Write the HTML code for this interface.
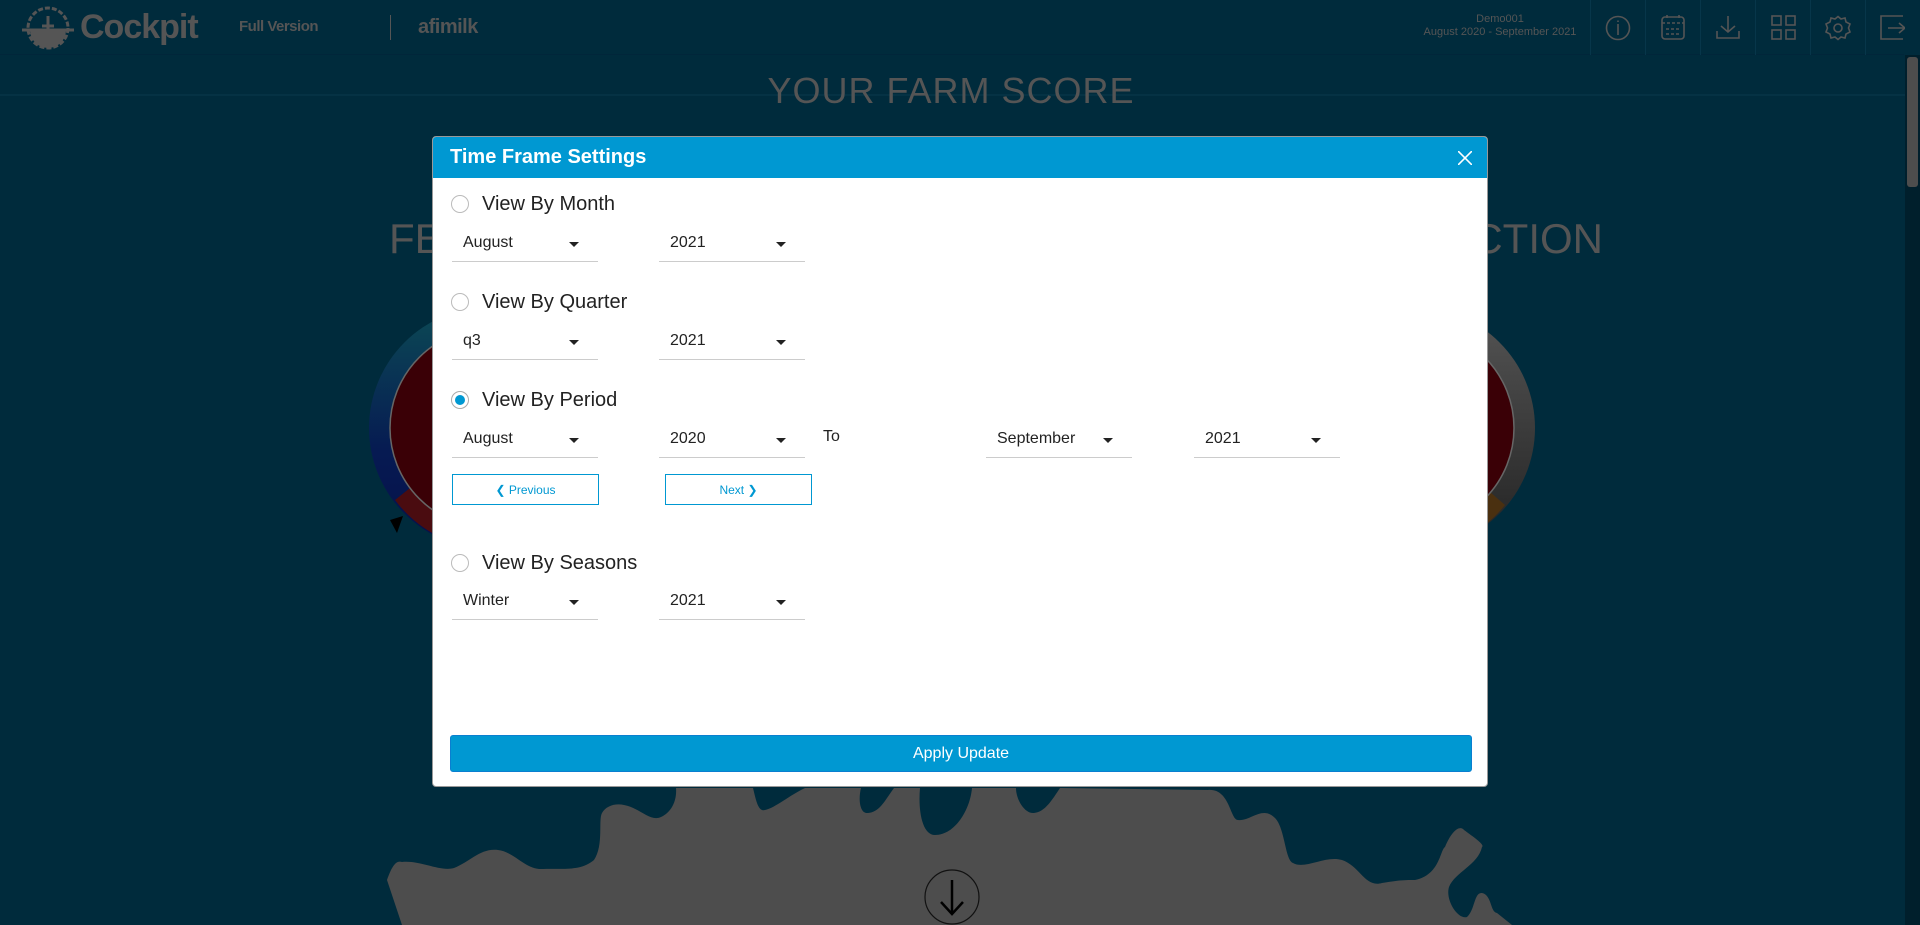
<!DOCTYPE html>
<html><head><meta charset="utf-8"><style>
*{box-sizing:border-box;margin:0;padding:0}
body{width:1920px;height:925px;overflow:hidden;background:#002b3c;font-family:"Liberation Sans",sans-serif;position:relative}
.abs{position:absolute}
.hdr{left:0;top:0;width:1904px;height:55px;border-bottom:1px solid #01263a;background:#002b3c}
.gray{color:#555}
.icd{position:absolute;top:0;height:55px;border-left:1px solid #07364a}
.modal{left:432px;top:136px;width:1056px;height:651px;background:#fff;border-radius:4px;overflow:hidden;border:1px solid #999}
.mh{height:41px;background:#0098d2;color:#fff;font-weight:bold;font-size:20px;padding:9px 0 0 17px}
.lbl{font-size:20px;color:#222}
.radio{width:18px;height:18px;border:1px solid #bbb;border-radius:50%;background:#fff}
.sel{width:146px;height:30px;border-bottom:1px solid #ccc;font-size:16px;color:#222;padding:2px 0 0 11px}
.sel:after{content:"";position:absolute;right:19px;top:10px;border-left:5px solid transparent;border-right:5px solid transparent;border-top:5px solid #222}
.btn{width:147px;height:31px;border:1px solid #0098d2;color:#0098d2;font-size:12px;text-align:center;padding-top:8px}
</style></head><body>
<svg class="abs" style="left:0;top:0" width="1920" height="925">
<line x1="0" y1="95" x2="1905" y2="95" stroke="#0a3a4d" stroke-width="1"/>
<text x="951" y="103" text-anchor="middle" font-family="Liberation Sans" font-size="36" fill="#555" letter-spacing="1">YOUR FARM SCORE</text>
<text x="389" y="253" font-family="Liberation Sans" font-size="42" fill="#555">FE</text>
<text x="1603" y="253" text-anchor="end" font-family="Liberation Sans" font-size="42" fill="#555">CTION</text>
<defs><linearGradient id="lg" x1="0" y1="0" x2="0" y2="1"><stop offset="0" stop-color="#0c4a55"/><stop offset=".6" stop-color="#061a52"/><stop offset="1" stop-color="#05104a"/></linearGradient>
<linearGradient id="rg" x1="0" y1="0" x2="0" y2="1"><stop offset="0" stop-color="#555"/><stop offset="1" stop-color="#222"/></linearGradient></defs>
<circle cx="490" cy="428" r="121" fill="url(#lg)"/>
<path d="M395 500 A121 121 0 0 0 490 549 L490 528 A100 100 0 0 1 410 488Z" fill="#4a0c10"/>
<circle cx="490" cy="428" r="100" fill="#3a0006" stroke="#666" stroke-width="1.5"/>
<polygon points="390,520 403,516 397,533" fill="#000"/>
<circle cx="1414" cy="428" r="121" fill="url(#rg)"/>
<path d="M1505 505 A121 121 0 0 1 1470 535 L1460 518 A100 100 0 0 0 1490 492Z" fill="#4a3010"/>
<circle cx="1414" cy="428" r="100" fill="#3a0006" stroke="#666" stroke-width="1.5"/>
<path d="M387 880 C392 866 396 860 402 862 C420 860 440 872 454 868 C470 862 480 848 498 850 C515 852 525 870 543 869 C560 868 580 872 594 860 C604 845 598 820 602 813 C606 806 615 803 624 805 C640 808 650 822 661 817 C672 812 677 800 676 788 L753 788 C756 800 758 812 765 810 C775 808 790 795 805 788 L861 788 C858 800 860 814 868 813 C880 812 885 800 894 788 L920 788 C918 810 922 835 935 835 C955 835 970 810 972 788 L1016 788 C1016 800 1025 814 1034 813 C1045 812 1052 800 1060 788 L1208 790 C1230 788 1230 820 1238 820 C1250 822 1262 805 1275 818 C1285 828 1285 860 1293 863 C1305 870 1325 855 1342 860 C1360 866 1365 888 1382 883 C1400 880 1405 880 1415 880 C1440 875 1440 850 1445 847 C1452 830 1460 825 1464 830 C1475 838 1485 845 1482 847 C1478 865 1455 872 1449 887 C1445 900 1458 920 1467 917 C1475 910 1474 892 1482 893 C1492 895 1490 912 1497 913 L1512 925 L402 925 Z" fill="#4d4d4d"/>
<ellipse cx="952" cy="897" rx="27" ry="27" fill="none" stroke="#111" stroke-width="1.2"/>
<path d="M952 880 V914 M941 902 L952 914 L963 902" fill="none" stroke="#000" stroke-width="2.5"/>
<rect x="1905" y="55" width="15" height="870" fill="#001f2c"/>
<rect x="1907" y="57" width="11" height="130" rx="3" fill="#4d4d4d"/>
</svg>
<div class="abs hdr">
<svg class="abs" style="left:20px;top:4px" width="56" height="48" viewBox="0 0 56 48">
<circle cx="28" cy="24" r="20" fill="none" stroke="#555" stroke-width="3" stroke-dasharray="5 2"/>
<path d="M10 26 A18 18 0 0 0 46 26Z" fill="#555"/>
<path d="M2 26 H54 M28 12 V30 M22 22 H34" stroke="#555" stroke-width="3"/>
</svg>
<div class="abs gray" style="left:80px;top:8px;font-size:34px;font-weight:bold;letter-spacing:-1px">Cockpit</div>
<div class="abs gray" style="left:239px;top:18px;font-size:15px;font-weight:bold;letter-spacing:-0.5px">Full Version</div>
<div class="abs" style="left:390px;top:15px;width:1px;height:25px;background:#555"></div>
<div class="abs gray" style="left:418px;top:16px;font-size:20px;font-weight:bold;letter-spacing:-0.5px">afimilk</div>
<div class="abs gray" style="left:1420px;top:13px;width:160px;text-align:center;font-size:11px;line-height:13px">Demo001<br>August 2020 - September 2021</div>
<div class="icd" style="left:1590px"></div><div class="icd" style="left:1645px"></div><div class="icd" style="left:1700px"></div><div class="icd" style="left:1755px"></div><div class="icd" style="left:1810px"></div><div class="icd" style="left:1865px"></div>
<svg class="abs" style="left:1590px;top:0" width="315" height="55" fill="none" stroke="#555" stroke-width="1.6">
<circle cx="28" cy="28" r="11.5"/><path d="M28 24 V35 M28 20.5 V22"/>
<rect x="72" y="17" width="22" height="22" rx="3"/><path d="M72 23 H94 M77 15 V19 M89 15 V19 M76 29 H90 M76 34 H90" stroke-dasharray="3 2"/>
<path d="M138 16 V32 M131 26 L138 32 L145 26 M127 31 V38 H149 V31"/>
<rect x="182" y="16" width="9" height="9"/><rect x="196" y="16" width="9" height="9"/><rect x="182" y="30" width="9" height="9"/><rect x="196" y="30" width="9" height="9"/>
<circle cx="248" cy="28" r="4"/><path d="M248 16.5 L251 19 L255 18 L256 22 L260 24 L258.5 28 L260 32 L256 34 L255 38 L251 37 L248 39.5 L245 37 L241 38 L240 34 L236 32 L237.5 28 L236 24 L240 22 L241 18 L245 19Z"/>
<path d="M313 16 H291 V39 H313 M298 28 H315 M309 23 L315 28 L309 33"/>
</svg>
</div>
<div class="abs modal">
<div class="mh">Time Frame Settings</div>
<svg class="abs" style="left:1025px;top:14px" width="14" height="14" stroke="#fff" stroke-width="1.6"><path d="M0 0 L14 14 M14 0 L0 14"/></svg>
<div class="abs radio" style="left:18px;top:58px"></div><div class="abs lbl" style="left:49px;top:56px">View By Month</div>
<div class="abs sel" style="left:19px;top:95px">August</div><div class="abs sel" style="left:226px;top:95px">2021</div>
<div class="abs radio" style="left:18px;top:156px"></div><div class="abs lbl" style="left:49px;top:154px">View By Quarter</div>
<div class="abs sel" style="left:19px;top:193px">q3</div><div class="abs sel" style="left:226px;top:193px">2021</div>
<div class="abs radio" style="left:18px;top:254px;border-color:#aaa"><div class="abs" style="left:3px;top:3px;width:10px;height:10px;border-radius:50%;background:#0098d2"></div></div><div class="abs lbl" style="left:49px;top:252px">View By Period</div>
<div class="abs sel" style="left:19px;top:291px">August</div><div class="abs sel" style="left:226px;top:291px">2020</div>
<div class="abs" style="left:390px;top:291px;font-size:16px;color:#222">To</div>
<div class="abs sel" style="left:553px;top:291px">September</div><div class="abs sel" style="left:761px;top:291px">2021</div>
<div class="abs btn" style="left:19px;top:337px">&#10094; Previous</div><div class="abs btn" style="left:232px;top:337px">Next &#10095;</div>
<div class="abs radio" style="left:18px;top:417px"></div><div class="abs lbl" style="left:49px;top:415px">View By Seasons</div>
<div class="abs sel" style="left:19px;top:453px">Winter</div><div class="abs sel" style="left:226px;top:453px">2021</div>
<div class="abs" style="left:17px;top:598px;width:1022px;height:37px;background:#0098d2;border:1px solid #0a7fd0;border-radius:3px;color:#fff;font-size:16px;text-align:center;padding-top:9px">Apply Update</div>
</div>
</body></html>
